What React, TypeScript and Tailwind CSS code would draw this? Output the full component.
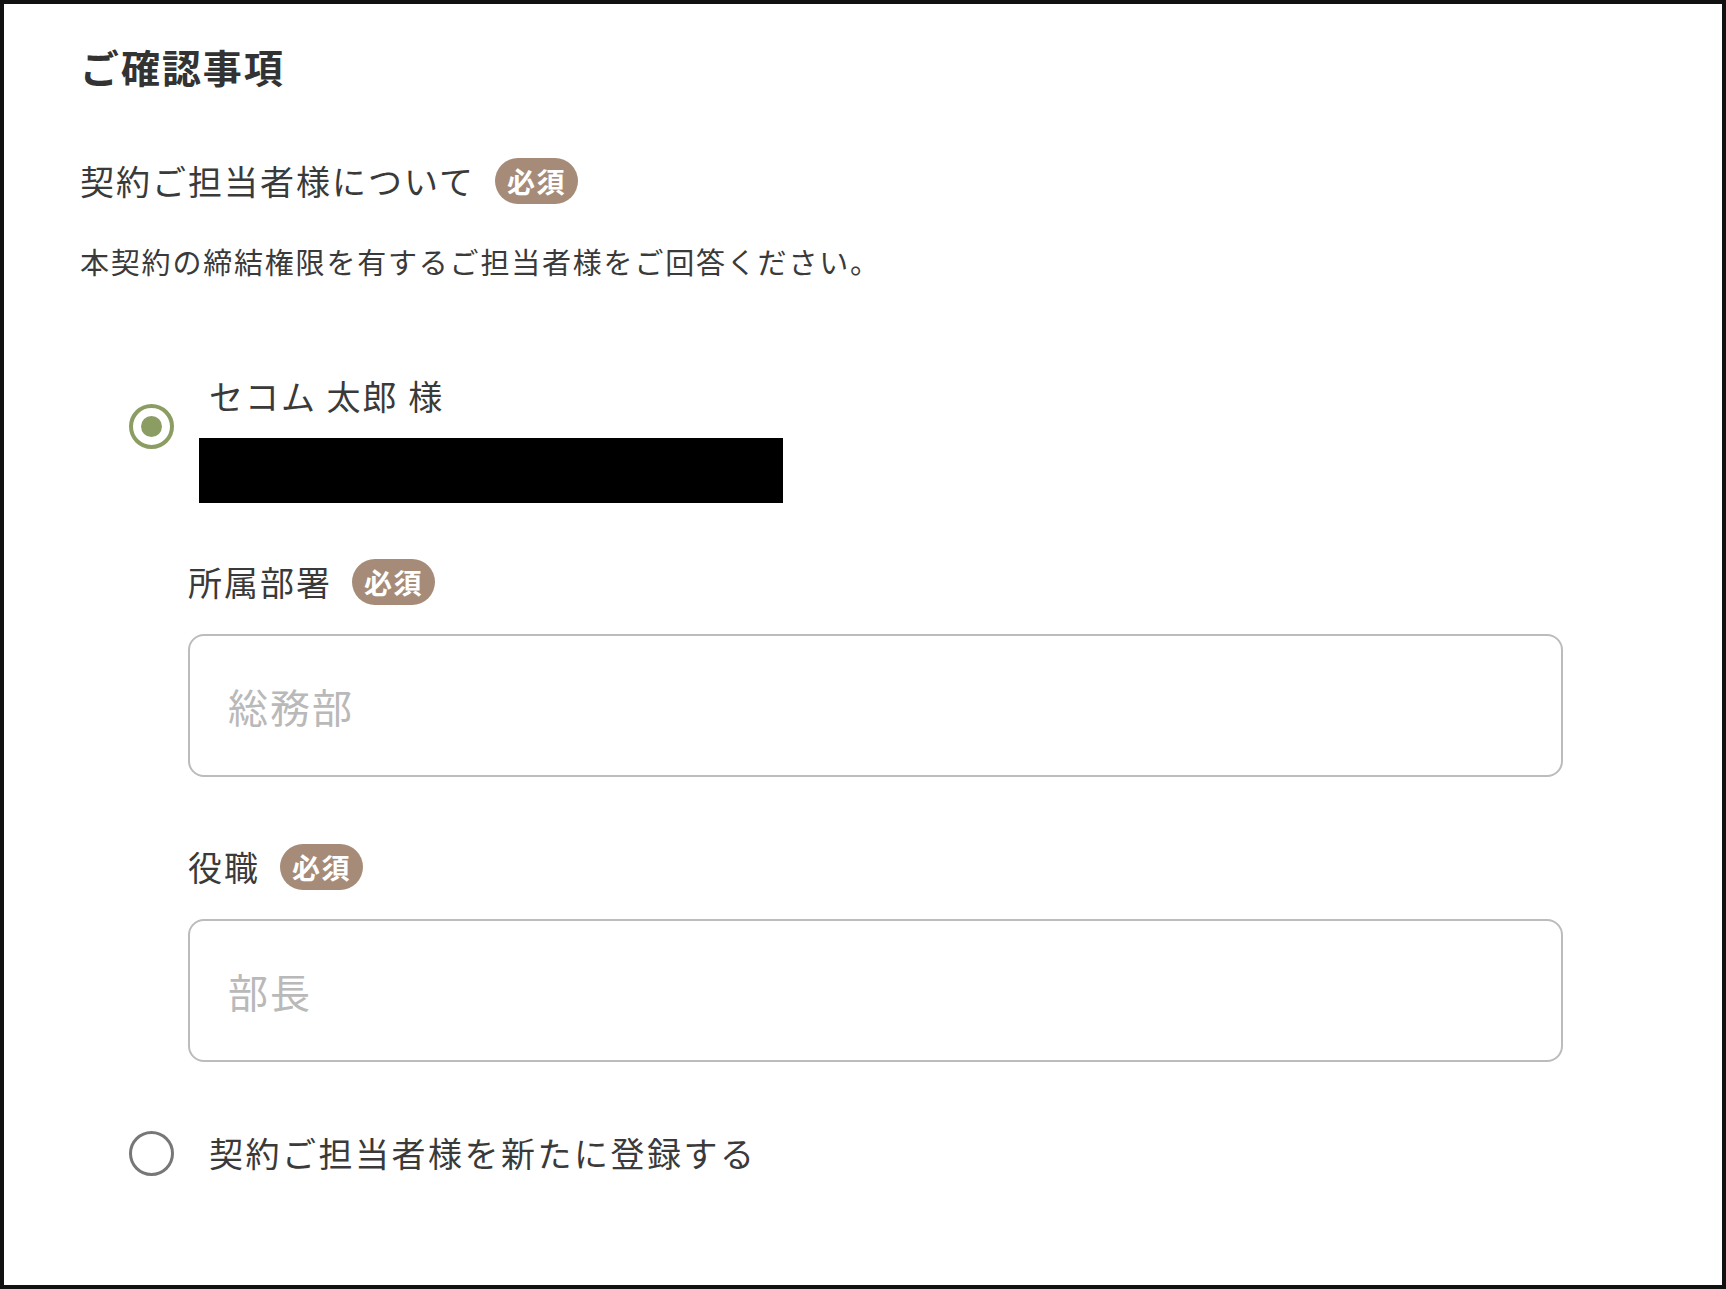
const font = { fontFamily: '"Noto Sans CJK JP", "Noto Sans", sans-serif' };

const Badge = () => (
  <span className="inline-flex h-[46px] items-center rounded-full bg-[#a58b78] px-[12px] text-[28px] font-bold leading-none tracking-[0.05em] text-white">
    必須
  </span>
);

const Radio = ({ checked }: { checked?: boolean }) =>
  checked ? (
    <span className="flex h-[45px] w-[45px] shrink-0 items-center justify-center rounded-full border-[4px] border-[#8c9d64] bg-white">
      <span className="h-[21px] w-[21px] rounded-full bg-[#8c9d64]" />
    </span>
  ) : (
    <span className="h-[45px] w-[45px] shrink-0 rounded-full border-[3px] border-[#777777] bg-white" />
  );

const Field = ({ label, placeholder }: { label: string; placeholder: string }) => (
  <div>
    <div className="flex h-[46px] items-center gap-[20px]">
      <span className="text-[34px] leading-[40px] tracking-[2px] text-[#3a3a3a]">{label}</span>
      <Badge />
    </div>
    <input
      type="text"
      placeholder={placeholder}
      className="mt-[29px] block h-[143px] w-[1375px] rounded-[16px] border-2 border-[#bcbcbc] bg-white pl-[38px] text-[40px] tracking-[2px] text-[#3a3a3a] outline-none placeholder:text-[#b9b9b9]"
    />
  </div>
);

const App = () => {
  return (
    <div style={font} className="box-border h-[1289px] w-[1726px] border-[4px] border-[#111111] bg-white pl-[76px] pt-[42px]">
      <h1 className="text-[39px] font-bold leading-[40px] tracking-[0.05em] text-[#333333]">ご確認事項</h1>

      <div className="mt-[72px] flex h-[46px] items-center gap-[20px]">
        <span className="text-[34px] leading-[40px] tracking-[2px] text-[#3a3a3a]">契約ご担当者様について</span>
        <Badge />
      </div>

      <p className="mt-[37px] text-[29px] leading-[40px] tracking-[1.8px] text-[#3a3a3a]">
        本契約の締結権限を有するご担当者様をご回答ください。
      </p>

      <div className="ml-[49px] mt-[95px] flex items-start gap-[25px]">
        <div className="mt-[28px]">
          <Radio checked />
        </div>
        <div>
          <div className="pl-[10px] text-[34px] leading-[40px] tracking-[2px] text-[#3a3a3a]">セコム 太郎 様</div>
          <div className="mt-[22px] h-[65px] w-[584px] bg-black" />
        </div>
      </div>

      <div className="ml-[108px] mt-[56px] flex flex-col gap-[67px]">
        <Field label="所属部署" placeholder="総務部" />
        <Field label="役職" placeholder="部長" />
      </div>

      <div className="ml-[49px] mt-[68px] flex h-[46px] items-center gap-[35px]">
        <Radio />
        <span className="text-[34px] leading-[40px] tracking-[2.5px] text-[#3a3a3a]">契約ご担当者様を新たに登録する</span>
      </div>
    </div>
  );
};

export default App;
